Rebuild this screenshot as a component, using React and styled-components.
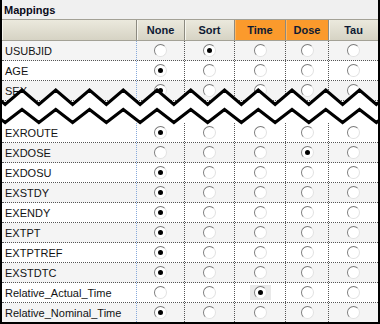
import styled, { createGlobalStyle } from "styled-components";

const GlobalStyle = createGlobalStyle`
  html, body { margin: 0; padding: 0; background: #fff; }
  body { font-family: "Liberation Sans", Arial, sans-serif; }
`;

const COLS = "135px 48px 50px 51px 43px 49px";
const FIELDS = ["None", "Sort", "Time", "Dose", "Tau"];

const topRows = [
  { name: "USUBJID", pick: "Sort" },
  { name: "AGE", pick: "None" },
];

const bottomRows = [
  { name: "EXROUTE", pick: "None" },
  { name: "EXDOSE", pick: "Dose" },
  { name: "EXDOSU", pick: "None" },
  { name: "EXSTDY", pick: "None" },
  { name: "EXENDY", pick: "None" },
  { name: "EXTPT", pick: "None" },
  { name: "EXTPTREF", pick: "None" },
  { name: "EXSTDTC", pick: "None" },
  { name: "Relative_Actual_Time", pick: "Time", focus: true },
  { name: "Relative_Nominal_Time", pick: "None" },
];

const Panel = styled.div`
  width: 380px;
  height: 324px;
  box-sizing: border-box;
  border-left: 2px solid #000;
  border-right: 2px solid #000;
  border-bottom: 2px solid #000;
  background: #fff;
  overflow: hidden;
`;

const TitleBar = styled.div`
  height: 19px;
  background: #f0f0f0;
  display: flex;
  align-items: center;
  padding-left: 2px;
  font-size: 11px;
  font-weight: bold;
  color: #0a0a1a;
`;

const HeaderRow = styled.div`
  display: grid;
  grid-template-columns: ${COLS};
  height: 22px;
  box-sizing: border-box;
  border-top: 1px solid #a3a196;
  border-bottom: 1px solid #a3a196;
`;

const HeadCell = styled.div`
  display: flex;
  align-items: center;
  justify-content: center;
  box-sizing: border-box;
  border-right: 1px solid #8c8a80;
  box-shadow: inset 1px 0 0 ${p => (p.$hot ? "#ffb55e" : "#f6f5ee")};
  background: ${p =>
    p.$hot ? "#fb9a2c" : "linear-gradient(#ebe9dd, #d6d3c4)"};
  font-size: 11px;
  font-weight: bold;
  color: #0e1a33;
  &:last-child { border-right: none; }
`;

const Row = styled.div`
  display: grid;
  grid-template-columns: ${COLS};
  height: 20px;
  box-sizing: border-box;
  border-bottom: 1px dotted #555;
  background: ${p => (p.$shade ? "#f4f4f4" : "#fff")};
  &:last-child { border-bottom: none; height: 19px; }
`;

const NameCell = styled.div`
  display: flex;
  align-items: center;
  padding-left: 3px;
  border-right: 1px dotted #86a9dc;
  font-size: 11px;
  color: #121212;
  white-space: nowrap;
`;

const PickCell = styled.div`
  display: flex;
  align-items: center;
  justify-content: center;
  border-right: 1px dotted #555;
  &:last-child { border-right: none; }
`;

const Focus = styled.span`
  display: flex;
  align-items: center;
  justify-content: center;
  padding: 1px 4px;
  background: ${p => (p.$on ? "#e9e9e9" : "transparent")};
`;

const Radio = styled.span`
  width: 11px;
  height: 11px;
  border-radius: 50%;
  border: 1px solid;
  border-color: #7c7c7c #e2e2e2 #e2e2e2 #7c7c7c;
  background: #fff;
  display: flex;
  align-items: center;
  justify-content: center;
  &::after {
    content: "";
    width: 5px;
    height: 5px;
    border-radius: 50%;
    background: ${p => (p.$on ? "#000" : "transparent")};
  }
`;

const Break = styled.div`
  position: relative;
  height: 42px;
`;

const BreakArt = styled.svg`
  position: absolute;
  top: 0;
  left: -2px;
  overflow: visible;
`;

const zig = (top, bottom) => {
  const pts = [];
  for (let k = -1; k < 13; k++) {
    const px = 22 + k * 33.75;
    pts.push([px, top], [px + 16.875, bottom]);
  }
  return pts;
};

const line1 = zig(9, 23.5);
const line2 = zig(28.5, 41.5);
const toStr = pts => pts.map(p => p.join(",")).join(" ");

const MapRow = ({ row, shade }) => (
  <Row $shade={shade}>
    <NameCell>{row.name}</NameCell>
    {FIELDS.map(f => (
      <PickCell key={f}>
        <Focus $on={row.focus && row.pick === f}>
          <Radio $on={row.pick === f} />
        </Focus>
      </PickCell>
    ))}
  </Row>
);

export default function App() {
  return (
    <>
      <GlobalStyle />
      <Panel>
        <TitleBar>Mappings</TitleBar>
        <HeaderRow>
          <HeadCell />
          {FIELDS.map(f => (
            <HeadCell key={f} $hot={f === "Time" || f === "Dose"}>
              {f}
            </HeadCell>
          ))}
        </HeaderRow>
        {topRows.map((r, i) => (
          <MapRow key={r.name} row={r} shade={i % 2 === 0} />
        ))}
        <Break>
          <MapRow row={{ name: "SEX", pick: "None" }} shade />
          <BreakArt width="380" height="42" viewBox="0 0 380 42">
            <polygon
              points={toStr([...line1, ...line2.slice().reverse()])}
              fill="#fff"
            />
            <polyline points={toStr(line1)} fill="none" stroke="#000" strokeWidth="3" />
            <polyline points={toStr(line2)} fill="none" stroke="#000" strokeWidth="3" />
          </BreakArt>
        </Break>
        {bottomRows.map((r, i) => (
          <MapRow key={r.name} row={r} shade={i % 2 === 1} />
        ))}
      </Panel>
    </>
  );
}
